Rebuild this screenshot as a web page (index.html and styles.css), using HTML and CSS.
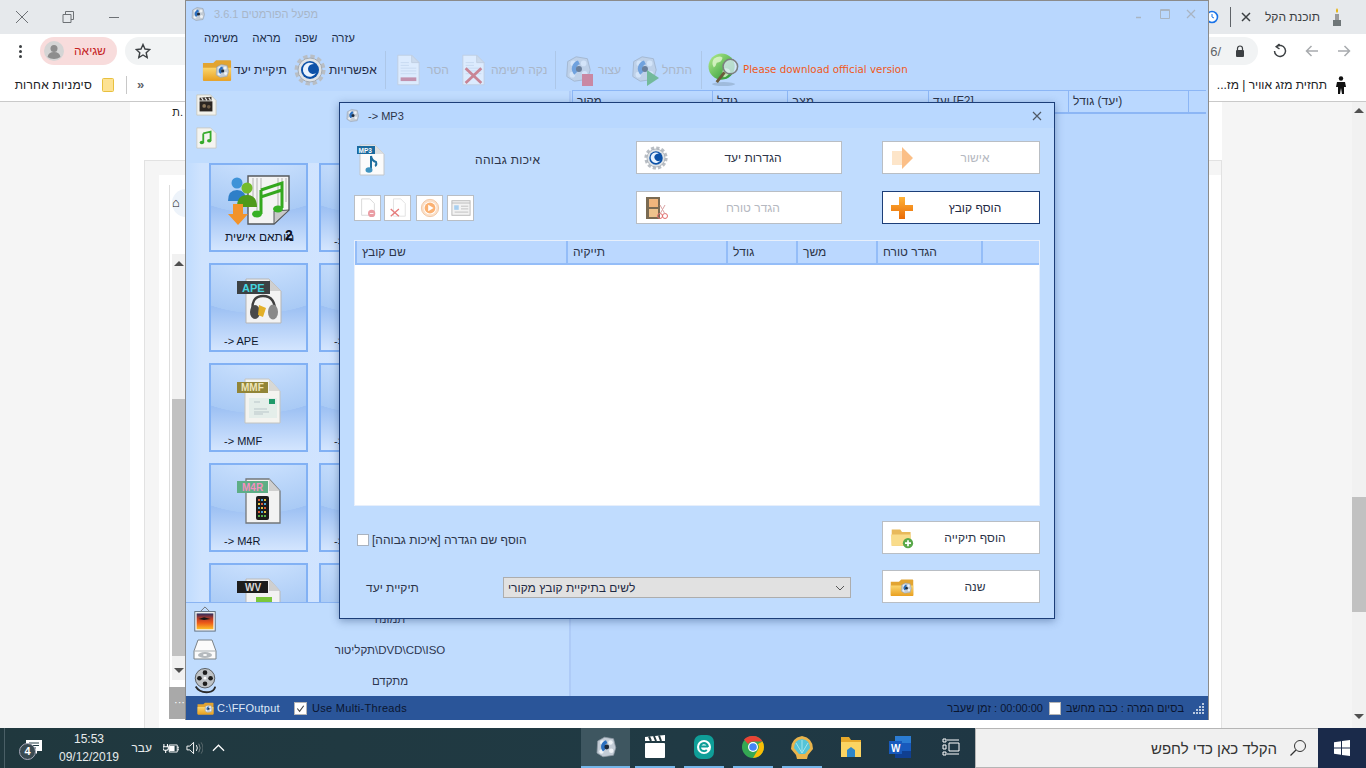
FILE: index.html
```html
<!DOCTYPE html>
<html lang="he">
<head>
<meta charset="utf-8">
<title>Format Factory</title>
<link rel="stylesheet" href="styles.css">
</head>
<body>
<svg class="defs" aria-hidden="true">
  <defs>
    <linearGradient id="gFolder" x1="0" y1="0" x2="0" y2="1"><stop offset="0" stop-color="#fbd66f"/><stop offset="1" stop-color="#e9a020"/></linearGradient>
    <linearGradient id="gGlobe" x1="0" y1="0" x2="1" y2="1"><stop offset="0" stop-color="#b6ee8e"/><stop offset="1" stop-color="#1d8f2e"/></linearGradient>
    <linearGradient id="gPlus" x1="0" y1="0" x2="0" y2="1"><stop offset="0" stop-color="#ffb338"/><stop offset="1" stop-color="#e96a05"/></linearGradient>
    <linearGradient id="gSunset" x1="0" y1="0" x2="0" y2="1"><stop offset="0" stop-color="#2a2c5f"/><stop offset=".3" stop-color="#b23a2a"/><stop offset=".6" stop-color="#ee5a18"/><stop offset="1" stop-color="#fbc02a"/></linearGradient>
    <symbol id="app" viewBox="0 0 32 32">
      <path d="M5 8 L14 3 L26 5 L29 17 L26 27 L12 29 L4 24 Z" fill="#c3ccd6" stroke="#8f99a4"/>
      <circle cx="11" cy="10" r="3" fill="#eef2f6"/><circle cx="22" cy="10" r="3" fill="#eef2f6"/>
      <circle cx="23" cy="21" r="3" fill="#eef2f6"/><circle cx="10" cy="22" r="3" fill="#eef2f6"/>
      <path d="M16 7 a9 9 0 0 0 -4 15 l4 -4 a4 4 0 0 1 2 -7 Z" fill="#2a6fc0"/>
      <circle cx="17" cy="16" r="3.2" fill="#1e2a3a"/>
    </symbol>
    <symbol id="folder" viewBox="0 0 32 26">
      <path d="M1 6 h11 l3 -3 h15 a1 1 0 0 1 1 1 v20 a1 1 0 0 1 -1 1 H2 a1 1 0 0 1 -1 -1 Z" fill="#e2a431"/>
      <path d="M1 11 h30 v13 a1 1 0 0 1 -1 1 H2 a1 1 0 0 1 -1 -1 Z" fill="url(#gFolder)"/>
      <use href="#app" x="13" y="6" width="17" height="17"/>
    </symbol>
    <symbol id="gear" viewBox="0 0 32 32">
      <circle cx="16" cy="16" r="13" fill="none" stroke="#b9bec4" stroke-width="5" stroke-dasharray="4.1 2.7"/>
      <circle cx="16" cy="16" r="12" fill="#dfe3e6" stroke="#a4abb3"/>
      <circle cx="16" cy="16" r="9" fill="#0d52a8"/>
      <path d="M20 10 a7 7 0 1 0 2 9 a5 5 0 1 1 -6 -8 q2 -1 4 -1 Z" fill="#e8f3ff"/>
    </symbol>
    <symbol id="doc" viewBox="0 0 26 34">
      <path d="M2 1 H17 L25 9 V33 H2 Z" fill="#fff" stroke="#c7c7c7"/>
      <path d="M17 1 V9 H25 Z" fill="#ddd" stroke="#c7c7c7"/>
    </symbol>
    <symbol id="docLines" viewBox="0 0 26 34">
      <use href="#doc" width="26" height="34"/>
      <path d="M5 9 H14 M5 12 H14 M5 15 H22 M5 18 H22 M5 21 H22" stroke="#d4dbe4"/>
    </symbol>
    <symbol id="tbRemove" viewBox="0 0 26 34">
      <use href="#docLines" width="26" height="34"/>
      <rect x="5" y="25" width="17" height="4" fill="#cc4f60"/>
    </symbol>
    <symbol id="tbClear" viewBox="0 0 26 34">
      <use href="#docLines" width="26" height="34"/>
      <path d="M5 15 L22 31 M22 15 L5 31" stroke="#d8342f" stroke-width="3"/>
    </symbol>
    <symbol id="globe" viewBox="0 0 34 36">
      <ellipse cx="16" cy="33" rx="12" ry="2" fill="#9fbbdc"/>
      <circle cx="14" cy="15" r="13.5" fill="url(#gGlobe)"/>
      <path d="M6 7 q6 -4 9 -1 q-1 5 -6 5 q-1 4 -3 5 q-3 -4 0 -9 Z M16 17 q6 -1 7 3 q-3 6 -7 6 q-2 -5 0 -9 Z" fill="#e7f9d5" opacity=".75"/>
      <circle cx="23" cy="15" r="7.5" fill="#dcecfa" fill-opacity=".75" stroke="#7c7f80" stroke-width="1.6"/>
      <path d="M17 21 L9 31" stroke="#6b5a3a" stroke-width="3"/>
    </symbol>
    <symbol id="film" viewBox="0 0 24 24">
      <path d="M2 1 H17 L23 7 V23 H2 Z" fill="#f2f2ec" stroke="#c9c9c0"/>
      <rect x="5" y="8" width="14" height="11" fill="#2b2622"/>
      <path d="M5 4 l13 -1 v4 H5 Z" fill="#3b342d"/>
      <path d="M7 4 l2 3 M11 4 l2 3 M15 4 l2 3" stroke="#eee" stroke-width="1.2"/>
      <circle cx="10" cy="13" r="2" fill="#8e7a5d"/><circle cx="15" cy="14" r="2" fill="#6f5e48"/>
    </symbol>
    <symbol id="musicDoc" viewBox="0 0 24 24">
      <path d="M2 1 H17 L23 7 V23 H2 Z" fill="#f4f4f0" stroke="#cbcbc4"/>
      <path d="M9 7 l8 -2 v10 M9 7 v10" stroke="#37ab2c" stroke-width="2" fill="none"/>
      <ellipse cx="7.5" cy="17" rx="2.4" ry="1.9" fill="#37ab2c"/><ellipse cx="15.5" cy="15" rx="2.4" ry="1.9" fill="#37ab2c"/>
    </symbol>
    <symbol id="custom" viewBox="0 0 66 54">
      <path d="M22 3 H63 V37 L48 51 H22 Z" fill="#f4f4f4" stroke="#54585c" stroke-width="1.4"/>
      <path d="M63 37 L48 51 V38 Z" fill="#c8c8c8" stroke="#54585c"/>
      <path d="M27 5 v28 M31 5 v32 M35 5 v26 M52 5 v30 M56 5 v28 M60 5 v24" stroke="#c7c7c7" stroke-width="1.5"/>
      <path d="M35 17 V41 M35 17 L56 10 V35 M35 17 V24 L56 17" stroke="#34a81f" stroke-width="3" fill="none"/>
      <ellipse cx="31" cy="41" rx="5" ry="3.5" fill="#37b125"/><ellipse cx="52" cy="36" rx="5" ry="3.5" fill="#37b125"/>
      <circle cx="11" cy="10" r="5.5" fill="#3f93d8"/><path d="M2 28 q0 -11 9 -11 q9 0 9 11 Z" fill="#2f7fc8"/>
      <circle cx="21" cy="15" r="5.5" fill="#74bb2c"/><path d="M11 34 q0 -12 10 -12 q10 0 10 12 Z" fill="#4e9a1b"/>
      <path d="M7 31 H17 V41 H22 L12 52 L2 41 H7 Z" fill="#f2932a"/>
    </symbol>
    <symbol id="ape" viewBox="0 0 46 46">
      <path d="M10 1 H33 L45 13 V45 H10 Z" fill="#f3f3f3" stroke="#b5b5b5"/>
      <path d="M33 1 V13 H45 Z" fill="#cfcfcf"/>
      <rect x="1" y="3" width="33" height="13" fill="#3c4144"/>
      <text x="6" y="13.5" class="fileTag tagCyan">APE</text>
      <path d="M17 36 q-3 -18 10 -18 q13 0 12 18" fill="none" stroke="#3e3e3e" stroke-width="2.4"/>
      <ellipse cx="19" cy="34" rx="5" ry="7" fill="#4a4a4a"/>
      <ellipse cx="37" cy="34" rx="5" ry="7.5" fill="#8a8a8a"/>
      <path d="M23 27 l7 3 l-3 9 l-5 -2 Z" fill="#e3b028"/>
    </symbol>
    <symbol id="mmf" viewBox="0 0 46 46">
      <path d="M9 1 H33 L44 13 V45 H9 Z" fill="#f4f4f0" stroke="#c4c4c0"/>
      <path d="M33 1 V13 H44 Z" fill="#d8d8d4"/>
      <rect x="1" y="4" width="31" height="11" fill="#928538"/>
      <text x="5" y="13" class="fileTag tagCream">MMF</text>
      <rect x="13" y="20" width="28" height="20" fill="#e4eeea"/>
      <path d="M18 24 H24 M18 31 H31 M18 34 H33 M18 36 H27" stroke="#b9c6c9"/>
      <rect x="33" y="21" width="6" height="5" fill="#1f9a6a"/>
    </symbol>
    <symbol id="m4r" viewBox="0 0 46 46">
      <path d="M10 1 H33 L44 13 V45 H10 Z" fill="#f2f2f2" stroke="#73777a" stroke-width="1.3"/>
      <path d="M33 1 V13 H44 Z" fill="#cfcfcf"/>
      <rect x="1" y="3" width="31" height="12" fill="#5eae86"/>
      <text x="6" y="13" class="fileTag tagPink">M4R</text>
      <rect x="20" y="18" width="13" height="24" rx="2" fill="#1c1c1c"/>
      <path d="M22 21 h2 v2 h-2 Z M25 25 h2 v2 h-2 Z M28 29 h2 v2 h-2 Z M22 33 h2 v2 h-2 Z" fill="#d85c3a"/>
      <path d="M25 21 h2 v2 h-2 Z M28 25 h2 v2 h-2 Z M22 29 h2 v2 h-2 Z M25 33 h2 v2 h-2 Z" fill="#4da5d8"/>
      <path d="M28 21 h2 v2 h-2 Z M22 25 h2 v2 h-2 Z M25 29 h2 v2 h-2 Z M28 33 h2 v2 h-2 Z" fill="#e3c43f"/>
      <path d="M22 37 h2 v2 h-2 Z M25 37 h2 v2 h-2 Z M28 37 h2 v2 h-2 Z" fill="#58b04c"/>
    </symbol>
    <symbol id="wv" viewBox="0 0 46 46">
      <path d="M10 1 H33 L44 13 V45 H10 Z" fill="#f2f2f2" stroke="#b8b8b8"/>
      <path d="M33 1 V13 H44 Z" fill="#cfcfcf"/>
      <rect x="1" y="3" width="31" height="12" fill="#1d1d1d"/>
      <text x="9" y="13" class="fileTag tagGrey">WV</text>
      <rect x="20" y="19" width="16" height="22" fill="#7ac73b"/>
    </symbol>
    <symbol id="mp3" viewBox="0 0 28 32">
      <path d="M3 1 H18 L27 10 V31 H3 Z" fill="#fbfbfb" stroke="#c2c6ca"/>
      <path d="M18 1 V10 H27 Z" fill="#dcdfe2"/>
      <rect x="0" y="2" width="18" height="8" fill="#1b6a9e"/>
      <text x="1.500" y="8.800" class="fileTag tagMp3">MP3</text>
      <path d="M14 12 q1 5 5 6 q1 3 -1 4 M14 12 V26" fill="none" stroke="#1f6f9f" stroke-width="2"/>
      <ellipse cx="12" cy="26" rx="3.500" ry="2.700" fill="#3f93bf"/>
    </symbol>
    <symbol id="plus" viewBox="0 0 24 24">
      <path d="M9 1 H15 V9 H23 V15 H15 V23 H9 V15 H1 V9 H9 Z" fill="url(#gPlus)"/>
    </symbol>
    <symbol id="arrowRight" viewBox="0 0 24 24">
      <path d="M2 5 H12 V1 L23 12 L12 23 V19 H2 Z" fill="#fbbf87"/>
      <path d="M2 5 H12 V19 H2 Z" fill="#fde5c9"/>
    </symbol>
    <symbol id="filmCut" viewBox="0 0 24 24">
      <rect x="2" y="1" width="14" height="22" fill="#7a6a52"/>
      <rect x="5" y="3" width="9" height="8" fill="#f0b57c"/><rect x="5" y="13" width="9" height="8" fill="#eec28c"/>
      <circle cx="16" cy="20" r="2.500" fill="none" stroke="#e36b6b"/><circle cx="21" cy="20" r="2.500" fill="none" stroke="#e36b6b"/>
      <path d="M16 18 L21 9 M21 18 L16 9" stroke="#d9a2a2"/>
    </symbol>
    <symbol id="folderPlus" viewBox="0 0 28 26">
      <path d="M2 3 h10 l2 3 h10 v16 H2 Z" fill="#e8b95b"/><path d="M1 9 H24 V22 H2 Z" fill="#f9dc8b"/>
      <circle cx="21" cy="19" r="6" fill="#59a84a"/><path d="M21 15.500 V22.500 M17.500 19 H24.500" stroke="#fff" stroke-width="2"/>
    </symbol>
    <symbol id="scenic" viewBox="0 0 24 28">
      <path d="M7 6 L12 1 L17 6" fill="none" stroke="#6d6d6d"/>
      <rect x="1" y="6" width="22" height="21" fill="#f4f4f4" stroke="#5a6a7a"/>
      <rect x="3" y="8" width="18" height="17" fill="url(#gSunset)"/>
      <path d="M5 14 l6 -2 l7 2 l-7 1 Z" fill="#161616"/>
    </symbol>
    <symbol id="drive" viewBox="0 0 24 24">
      <path d="M5 2 H19 L23 13 V21 H1 V13 Z" fill="#fbfbfb" stroke="#7b8287"/>
      <path d="M1 13 H23" stroke="#a8afb3"/>
      <ellipse cx="12" cy="17" rx="7" ry="3" fill="#b5babe"/><ellipse cx="12" cy="17" rx="2" ry="1" fill="#fff"/>
    </symbol>
    <symbol id="reel" viewBox="0 0 24 28">
      <circle cx="12" cy="11" r="10.500" fill="#bfc3c6" stroke="#54585b"/>
      <circle cx="12" cy="5" r="2.500" fill="#1d1d1d"/><circle cx="6" cy="11" r="2.500" fill="#1d1d1d"/>
      <circle cx="18" cy="11" r="2.500" fill="#1d1d1d"/><circle cx="12" cy="17" r="2.500" fill="#1d1d1d"/>
      <circle cx="12" cy="11" r="1.500" fill="#fff"/>
      <path d="M2 20 q4 7 14 6 q6 -1 7 -6" fill="none" stroke="#2a2a2a" stroke-width="2"/>
    </symbol>
  </defs>
</svg>

<div class="screen">
  <div class="browser">
    <div class="tabstrip">
      <div class="wincontrols">
        <svg class="ico16" viewBox="0 0 16 16"><path d="M2 2 L14 14 M14 2 L2 14" stroke="#6d7175" stroke-width="1"/></svg>
        <svg class="ico16" viewBox="0 0 16 16"><path d="M3 5.500 H11 V13.500 H3 Z M5.500 5 V2.500 H13.500 V10.500 H11" fill="none" stroke="#6d7175"/></svg>
        <svg class="ico16" viewBox="0 0 16 16"><path d="M3 8.500 H13" stroke="#6d7175"/></svg>
      </div>
      <div class="tabinfo">
        <svg class="clock" viewBox="0 0 14 14"><circle cx="7" cy="7" r="5.500" fill="#fff" stroke="#1a73e8" stroke-width="1.600"/><path d="M7 4 V7 L9 8" fill="none" stroke="#1a73e8"/></svg>
        <i class="tabdiv"></i>
        <svg class="tabclose" viewBox="0 0 10 10"><path d="M1 1 L9 9 M9 1 L1 9" stroke="#3c4043" stroke-width="1.500"/></svg>
        <span class="tabtitle" dir="rtl">תוכנת הקל</span>
        <svg class="candle" viewBox="0 0 10 18"><path d="M5 0 q2 3 0 5 q-2 -2 0 -5" fill="#e8b100"/><rect x="3" y="6" width="4" height="6" fill="#9b9b9b"/><rect x="1" y="12" width="8" height="6" fill="#6f7678"/></svg>
      </div>
    </div>
    <div class="toolbar">
      <div class="menu-dots"><i></i><i></i><i></i></div>
      <div class="errorpill">
        <svg class="avatar" viewBox="0 0 20 20"><circle cx="10" cy="10" r="10" fill="#d5d5d5"/><circle cx="10" cy="7.500" r="3.500" fill="#8d8d8d"/><path d="M3.500 16 q1 -5 6.500 -5 q5.500 0 6.500 5 q-3 2 -6.500 2 q-3.500 0 -6.500 -2" fill="#8d8d8d"/></svg>
        <span dir="rtl">שגיאה</span>
      </div>
      <div class="omnibox">
        <svg class="star" viewBox="0 0 16 16"><path d="M8 1.500 L10 6 L14.800 6.500 L11.200 9.700 L12.200 14.500 L8 12 L3.800 14.500 L4.800 9.700 L1.200 6.500 L6 6 Z" fill="none" stroke="#3c4043" stroke-width="1.400"/></svg>
        <span class="urlend">6/</span>
        <svg class="lock" viewBox="0 0 10 12"><path d="M2.500 5 V3.500 a2.500 2.500 0 0 1 5 0 V5" fill="none" stroke="#3c4043" stroke-width="1.200"/><rect x="1" y="5" width="8" height="7" rx="1" fill="#3c4043"/></svg>
      </div>
      <div class="navbtns">
        <svg class="nav" viewBox="0 0 16 16"><path d="M13.500 8 a5.500 5.500 0 1 1 -2 -4.300 M8.500 1 L11.800 3.800 L8.500 6" fill="none" stroke="#3c4043" stroke-width="1.500" transform="matrix(-1 0 0 1 16 0)"/></svg>
        <svg class="nav" viewBox="0 0 16 16"><path d="M14 8 H2.500 M7.500 3 L2.500 8 L7.500 13" fill="none" stroke="#a8abae" stroke-width="1.500"/></svg>
        <svg class="nav" viewBox="0 0 16 16"><path d="M2 8 H13.500 M8.500 3 L13.500 8 L8.500 13" fill="none" stroke="#a8abae" stroke-width="1.500"/></svg>
      </div>
    </div>
    <div class="bookmarks">
      <span class="bm-other" dir="rtl">סימניות אחרות</span>
      <svg class="bm-folder" viewBox="0 0 12 14"><rect x="0.500" y="0.500" width="11" height="13" rx="1" fill="#fde293" stroke="#e8c03f"/></svg>
      <i class="bm-div"></i>
      <span class="bm-more">»</span>
      <span class="bm-fill"></span>
      <span class="bm-weather" dir="rtl">תחזית מזג אוויר | מז...</span>
      <svg class="bm-man" viewBox="0 0 12 18"><circle cx="6" cy="2.500" r="2.200" fill="#111"/><path d="M2 6 H10 L11 11 H9 L9 18 H7 L6 12 L5 18 H3 L3 11 H1 Z" fill="#111"/></svg>
    </div>
    <div class="page">
      <div class="gutter"></div>
      <div class="pagemain">
        <div class="pagetop">
          <span class="cutoff">ת.</span>
        </div>
        <div class="box">
          <div class="boxinner">
            <div class="innercol">
              <div class="searchslot"><span class="searchcircle">⌂</span></div>
              <div class="innerscroll">
                <span class="sb-up"></span>
                <span class="sb-track"></span>
                <span class="sb-thumb"></span>
                <span class="sb-down"></span>
              </div>
              <div class="greybar">···</div>
            </div>
          </div>
        </div>
      </div>
      <div class="gutter gutter-r"></div>
      <div class="pagescroll">
        <span class="ps-up"></span>
        <span class="ps-thumb"></span>
        <span class="ps-down"></span>
      </div>
    </div>
  </div>

  <div class="taskbar">
    <i class="tb-line"></i>
    <div class="notif">
      <svg class="notif-ico" viewBox="0 0 18 16"><path d="M1 1 H17 V12 H12 V15 L9 12 H1 Z" fill="#fff"/><path d="M4 4 H14 M4 6.500 H14 M4 9 H11" stroke="#223a42"/></svg>
      <span class="notif-badge">4</span>
    </div>
    <div class="clocktext"><span>15:53</span><span>09/12/2019</span></div>
    <span class="tb-lang" dir="rtl">עבר</span>
    <svg class="tb-batt" viewBox="0 0 18 12"><path d="M7 2 H16 V10 H7 Z M16 4.500 H18 V7.500 H16" fill="none" stroke="#fff"/><rect x="7" y="3" width="6" height="6" fill="#fff"/><path d="M1 1 V4 M5 1 V4 M0 4 H6 V6 Q6 8 3 8 Q0 8 0 6 Z M3 8 V11" fill="none" stroke="#fff" stroke-width="1.200"/></svg>
    <svg class="tb-sound" viewBox="0 0 18 14"><path d="M1 5 H4 L8 1 V13 L4 9 H1 Z" fill="none" stroke="#fff"/><path d="M11 4 q2 3 0 6" fill="none" stroke="#fff"/><path d="M13.500 2.500 q3 4.500 0 9" fill="none" stroke="#888f92"/><path d="M16 1 q4 6 0 12" fill="none" stroke="#5f6c70"/></svg>
    <svg class="tb-caret" viewBox="0 0 14 8"><path d="M1 7 L7 1 L13 7" fill="none" stroke="#fff" stroke-width="1.300"/></svg>
    <span class="tb-fill"></span>
    <div class="tb-apps">
      <div class="tb-app tb-active"><svg class="tb-appico" viewBox="0 0 32 32"><use href="#app"/></svg></div>
      <div class="tb-app tb-run">
        <svg class="tb-appico" viewBox="0 0 24 24"><rect x="2" y="8" width="20" height="15" rx="1" fill="#fff"/><path d="M2 2 L22 0 V6 H2 Z" fill="#fff"/><path d="M6 1.500 L8 6 M11 1 L13 6 M16 .5 L18 6" stroke="#23393f" stroke-width="2"/></svg>
      </div>
      <div class="tb-app tb-run">
        <svg class="tb-appico" viewBox="0 0 24 24"><rect x="2" y="0" width="20" height="24" rx="7" fill="#0f9e98"/><circle cx="12" cy="12" r="7" fill="#fff"/><path d="M8 11.500 H16 M16 12 a4 4 0 1 0 -1.200 3" fill="none" stroke="#0f9e98" stroke-width="2"/></svg>
      </div>
      <div class="tb-app tb-run">
        <svg class="tb-appico" viewBox="0 0 24 24"><circle cx="12" cy="12" r="11" fill="#34a853"/><path d="M12 1 A11 11 0 0 1 21.500 6.500 H12 A5.500 5.500 0 0 0 7 9 L3 4.500 A11 11 0 0 1 12 1" fill="#ea4335"/><path d="M21.500 6.500 A11 11 0 0 1 12 23 L16.800 15 A5.500 5.500 0 0 0 17 9 Z" fill="#fbbc05"/><circle cx="12" cy="12" r="5" fill="#fff"/><circle cx="12" cy="12" r="3.800" fill="#4285f4"/></svg>
      </div>
      <div class="tb-app tb-run">
        <svg class="tb-appico" viewBox="0 0 24 24"><path d="M12 1 Q23 3 23 14 L18 20 L17 24 H7 L6 20 L1 14 Q1 3 12 1" fill="#e9b44c"/><path d="M12 4 Q20 5 20 13 L15 19 H9 L4 13 Q4 5 12 4" fill="#55c4d8"/><path d="M12 18 L6 8 M12 18 L12 5 M12 18 L18 8" stroke="#a6e4ec"/></svg>
      </div>
      <div class="tb-app">
        <svg class="tb-appico" viewBox="0 0 24 24"><path d="M2 2 H10 L12 5 H22 V22 H2 Z" fill="#e8a92b"/><path d="M2 7 H22 V22 H2 Z" fill="#fcd462"/><path d="M8 22 V15 L12 12 L16 15 V22" fill="#2f86c9"/></svg>
      </div>
      <div class="tb-app">
        <svg class="tb-appico" viewBox="0 0 24 24"><rect x="7" y="1" width="16" height="22" fill="#2b7cd3"/><rect x="7" y="8" width="16" height="8" fill="#185abd"/><rect x="7" y="16" width="16" height="7" fill="#103f91"/><rect x="1" y="6" width="13" height="13" fill="#185abd"/><text x="3" y="16.500" class="wordW">W</text></svg>
      </div>
      <div class="tb-app">
        <svg class="tb-appico tb-view" viewBox="0 0 18 18"><path d="M1 1 H4 V4 H1 Z M1 7 H4 V11 H1 Z M1 14 H4 V17 H1 Z M5 2 H17 M5 16 H17 M7 5 H17 V13 H7 Z" fill="none" stroke="#fff"/></svg>
      </div>
    </div>
    <div class="searchbox">
      <span class="searchtext" dir="rtl">הקלד כאן כדי לחפש</span>
      <svg class="searchico" viewBox="0 0 18 18"><circle cx="11" cy="7" r="5.500" fill="none" stroke="#333"/><path d="M7 11 L1.500 16.500" stroke="#333" stroke-width="1.300"/></svg>
    </div>
    <div class="winbtn">
      <svg class="winlogo" viewBox="0 0 16 16"><path d="M0 2.200 L7 1.200 V7.500 H0 Z M8 1 L16 0 V7.500 H8 Z M0 8.500 H7 V14.800 L0 13.800 Z M8 8.500 H16 V16 L8 15 Z" fill="#fff"/></svg>
    </div>
  </div>

  <div class="ffwin">
    <div class="ff-title">
      <svg class="ff-titleicon" viewBox="0 0 32 32"><use href="#app"/></svg>
      <span class="ff-titletext" dir="rtl">מפעל הפורמטים 3.6.1</span>
      <div class="ff-controls">
        <svg class="ctl" viewBox="0 0 10 10"><path d="M2 8.500 H7" stroke="#a9b4c2" stroke-width="1.500"/></svg>
        <svg class="ctl" viewBox="0 0 10 10"><path d="M.5 .5 H9.500 V9.500 H.5 Z M.5 1.500 H9.500" fill="none" stroke="#a9b4c2"/></svg>
        <svg class="ctl" viewBox="0 0 10 10"><path d="M1 1 L9 9 M9 1 L1 9" stroke="#a9b4c2" stroke-width="1.200"/></svg>
      </div>
    </div>
    <div class="ff-menu" dir="ltr">
      <span>משימה</span><span>מראה</span><span>שפה</span><span>עזרה</span>
    </div>
    <div class="ff-tools">
      <svg class="t-folder" viewBox="0 0 32 26"><use href="#folder"/></svg>
      <span class="t-label t-l1">תיקיית יעד</span>
      <svg class="t-gear" viewBox="0 0 32 32"><use href="#gear"/></svg>
      <span class="t-label t-l2">אפשרויות</span>
      <i class="t-sep"></i>
      <svg class="t-doc dim" viewBox="0 0 26 34"><use href="#tbRemove"/></svg>
      <span class="t-label off t-l3">הסר</span>
      <svg class="t-doc dim t-i4" viewBox="0 0 26 34"><use href="#tbClear"/></svg>
      <span class="t-label off t-l4">נקה רשימה</span>
      <i class="t-sep t-s2"></i>
      <span class="t-reel dim"><svg class="t-reel-i" viewBox="0 0 32 32"><use href="#app"/></svg><i class="t-stop"></i></span>
      <span class="t-label off t-l5">עצור</span>
      <span class="t-reel dim t-i6"><svg class="t-reel-i" viewBox="0 0 32 32"><use href="#app"/></svg><i class="t-play"></i></span>
      <span class="t-label off t-l6">התחל</span>
      <i class="t-sep t-s3"></i>
      <svg class="t-globe" viewBox="0 0 34 36"><use href="#globe"/></svg>
      <span class="t-official">Please download official version</span>
    </div>
    <div class="ff-body">
      <div class="ff-left">
        <div class="cat-strip">
          <svg class="cat-ico" viewBox="0 0 24 24"><use href="#film"/></svg>
          <svg class="cat-ico" viewBox="0 0 24 24"><use href="#musicDoc"/></svg>
        </div>
        <div class="tiles">
          <div class="tile"><svg class="tile-custom" viewBox="0 0 66 54"><use href="#custom"/></svg><span class="tile-label tile-he" dir="rtl">מותאם אישית</span><b class="tile-badge">2</b></div>
          <div class="tile"><span class="tile-gap"></span><span class="tile-label">-&gt; MP3</span></div>
          <div class="tile"><svg class="tile-icon" viewBox="0 0 46 46"><use href="#ape"/></svg><span class="tile-label">-&gt; APE</span></div>
          <div class="tile"><span class="tile-gap"></span><span class="tile-label">-&gt; WMA</span></div>
          <div class="tile"><svg class="tile-icon" viewBox="0 0 46 46"><use href="#mmf"/></svg><span class="tile-label">-&gt; MMF</span></div>
          <div class="tile"><span class="tile-gap"></span><span class="tile-label">-&gt; FLAC</span></div>
          <div class="tile"><svg class="tile-icon" viewBox="0 0 46 46"><use href="#m4r"/></svg><span class="tile-label">-&gt; M4R</span></div>
          <div class="tile"><span class="tile-gap"></span><span class="tile-label">-&gt; AAC</span></div>
          <div class="tile"><svg class="tile-icon" viewBox="0 0 46 46"><use href="#wv"/></svg></div>
          <div class="tile"></div>
        </div>
        <div class="cats-bottom">
          <div class="cat-row"><svg class="cat-big" viewBox="0 0 24 28"><use href="#scenic"/></svg><span dir="rtl">תמונה</span></div>
          <div class="cat-row"><svg class="cat-big" viewBox="0 0 24 24"><use href="#drive"/></svg><span dir="rtl">DVD\CD\ISO\תקליטור</span></div>
          <div class="cat-row"><svg class="cat-big" viewBox="0 0 24 28"><use href="#reel"/></svg><span dir="rtl">מתקדם</span></div>
        </div>
      </div>
      <div class="ff-right">
        <div class="listhead">
          <span class="lh-a">מקור</span>
          <span class="lh-b">גודל</span>
          <span class="lh-c">מצב</span>
          <span class="lh-d">יעד [F2]</span>
          <span class="lh-e"><span class="lh-inner" dir="rtl">(יעד) גודל</span></span>
          <span class="lh-f"></span>
        </div>
      </div>
    </div>
    <div class="ff-status">
      <svg class="st-folder" viewBox="0 0 32 26"><use href="#folder"/></svg>
      <span class="st-path">C:\FFOutput</span>
      <span class="st-check"><svg viewBox="0 0 12 12"><path d="M2.500 6 L5 9 L9.500 3" fill="none" stroke="#444" stroke-width="1.200"/></svg></span>
      <span class="st-mt">Use Multi-Threads</span>
      <span class="st-fill"></span>
      <span class="st-time" dir="rtl">00:00:00 : זמן שעבר</span>
      <span class="st-check st-empty"></span>
      <span class="st-end" dir="rtl">בסיום המרה : כבה מחשב</span>
      <svg class="st-grip" viewBox="0 0 12 12"><path d="M9 1 h2 v2 h-2 Z M6 4 h2 v2 h-2 Z M9 4 h2 v2 h-2 Z M3 7 h2 v2 h-2 Z M6 7 h2 v2 h-2 Z M9 7 h2 v2 h-2 Z M0 10 h2 v2 h-2 Z M3 10 h2 v2 h-2 Z M6 10 h2 v2 h-2 Z M9 10 h2 v2 h-2 Z" fill="#b9c9e0"/></svg>
    </div>
  </div>

  <div class="dialog">
    <div class="dlg-title">
      <svg class="dlg-appicon" viewBox="0 0 32 32"><use href="#app"/></svg>
      <span class="dlg-name">-&gt; MP3</span>
      <svg class="dlg-close" viewBox="0 0 10 10"><path d="M1 1 L9 9 M9 1 L1 9" stroke="#505a66" stroke-width="1.200"/></svg>
    </div>
    <div class="dlg-body">
      <div class="dlg-quality">
        <svg class="dlg-mp3" viewBox="0 0 28 32"><use href="#mp3"/></svg>
        <span class="dlg-qtext" dir="rtl">איכות גבוהה</span>
      </div>
      <button class="btn"><svg class="btn-ico" viewBox="0 0 32 32"><use href="#gear"/></svg><span class="btn-text">הגדרות יעד</span></button>
      <span></span>
      <button class="btn btn-off"><svg class="btn-ico" viewBox="0 0 24 24"><use href="#arrowRight"/></svg><span class="btn-text">אישור</span></button>

      <div class="dlg-small">
        <span class="sbtn"><svg viewBox="0 0 20 22"><path d="M3 1 H12 L17 6 V19 H3 Z" fill="#fff" stroke="#d7d7d7"/><circle cx="14" cy="17" r="4" fill="#ea9ca3"/><path d="M12 17 H16" stroke="#fff"/></svg></span>
        <span class="sbtn"><svg viewBox="0 0 20 22"><path d="M5 1 H13 L18 6 V20 H5 Z" fill="#fff" stroke="#e0e0e0"/><path d="M2 12 L11 20 M11 12 L2 20" stroke="#e77b7b" stroke-width="1.500"/></svg></span>
        <span class="sbtn"><svg viewBox="0 0 22 22"><circle cx="11" cy="11" r="9.500" fill="#fbe0c9" stroke="#f1c6a2"/><circle cx="11" cy="11" r="7" fill="#fff"/><circle cx="11" cy="11" r="6" fill="#fbb172"/><path d="M9 7.500 L15 11 L9 14.500 Z" fill="#fff"/></svg></span>
        <span class="sbtn"><svg viewBox="0 0 22 18"><rect x="1" y="1" width="20" height="16" fill="#f2f2f2" stroke="#b7b7b7"/><path d="M1 3.500 H21" stroke="#b7b7b7"/><rect x="3.500" y="6" width="5" height="5" fill="#a8cff0"/><path d="M11 7 H19 M11 10 H19 M4 13.500 H19" stroke="#bdbdbd"/></svg></span>
      </div>
      <button class="btn btn-off"><svg class="btn-ico" viewBox="0 0 24 24"><use href="#filmCut"/></svg><span class="btn-text">הגדר טורח</span></button>
      <span></span>
      <button class="btn btn-focus"><svg class="btn-ico" viewBox="0 0 24 24"><use href="#plus"/></svg><span class="btn-text">הוסף קובץ</span></button>

      <div class="dlg-table">
        <div class="dt-head">
          <span class="c1">שם קובץ</span><span class="c2">תייקיה</span><span class="c3">גודל</span><span class="c4">משך</span><span class="c5">הגדר טורח</span><span class="c6"></span>
        </div>
      </div>

      <label class="dlg-addname"><span class="dlg-cb"></span><span dir="rtl">הוסף שם הגדרה [איכות גבוהה]</span></label>
      <span></span>
      <button class="btn"><svg class="btn-ico" viewBox="0 0 28 26"><use href="#folderPlus"/></svg><span class="btn-text">הוסף תיקייה</span></button>

      <div class="dlg-dest">
        <span class="dlg-destlabel" dir="rtl">תיקיית יעד</span>
        <div class="dlg-select">
          <span class="sel-text" dir="rtl">לשים בתיקיית קובץ מקורי</span>
          <svg class="sel-caret" viewBox="0 0 10 6"><path d="M1 1 L5 5 L9 1" fill="none" stroke="#555"/></svg>
        </div>
      </div>
      <span></span>
      <button class="btn"><svg class="btn-ico" viewBox="0 0 32 26"><use href="#folder"/></svg><span class="btn-text">שנה</span></button>
    </div>
  </div>
</div>
</body>
</html>
```

FILE: styles.css
```css
* { box-sizing: border-box; }
html, body { margin: 0; padding: 0; }
body { width: 1366px; height: 768px; overflow: hidden; font-family: "Liberation Sans", "DejaVu Sans", sans-serif; font-size: 12px; color: #1f2a44; background: #fff; }
.defs { width: 0; height: 0; position: absolute; }
.screen { position: relative; width: 1366px; height: 768px; display: flex; flex-direction: column; overflow: hidden; }
i { display: block; }
svg { display: block; flex: none; }

/* Browser behind */
.browser { height: 728px; display: flex; flex-direction: column; }
.tabstrip { height: 34px; background: #e6e9ec; display: flex; align-items: center; }
.wincontrols { display: flex; gap: 30px; padding-left: 14px; }
.ico16 { width: 16px; height: 16px; }
.tabinfo { margin-left: auto; display: flex; align-items: center; padding-right: 24px; color: #3c4043; }
.clock { width: 14px; height: 14px; margin-right: 11px; }
.tabdiv { width: 1px; height: 20px; background: #5f6368; margin-right: 10px; }
.tabclose { width: 10px; height: 10px; margin-right: 11px; }
.tabtitle { font-size: 12px; width: 58px; white-space: nowrap; overflow: hidden; margin-right: 12px; }
.candle { width: 10px; height: 18px; }
.toolbar { height: 34px; background: #fff; display: flex; align-items: center; }
.menu-dots { width: 40px; display: flex; flex-direction: column; align-items: center; gap: 2px; padding-right: 0; }
.menu-dots i { width: 3px; height: 3px; border-radius: 50%; background: #3c4043; }
.errorpill { width: 77px; height: 28px; border-radius: 14px; background: #f8dcdc; display: flex; align-items: center; padding-left: 4px; gap: 10px; color: #c5221f; font-size: 12px; }
.avatar { width: 20px; height: 20px; }
.omnibox { margin-left: 8px; width: 1133px; height: 28px; background: #f1f3f4; border-radius: 14px; display: flex; align-items: center; padding-left: 10px; }
.star { width: 16px; height: 16px; }
.urlend { margin-left: auto; margin-right: 14px; color: #5f6368; font-size: 13px; }
.lock { width: 10px; height: 12px; margin-right: 13px; }
.navbtns { display: flex; gap: 16px; margin-left: 14px; }
.nav { width: 16px; height: 16px; }
.bookmarks { height: 34px; background: #fff; display: flex; align-items: center; border-bottom: 1px solid #c9c9c9; padding: 0 19px 0 14px; }
.bm-other { color: #202124; font-size: 12px; width: 78px; white-space: nowrap; letter-spacing: .2px; }
.bm-folder { width: 12px; height: 14px; margin-left: 10px; }
.bm-div { width: 1px; height: 18px; background: #c8c8c8; margin-left: 12px; }
.bm-more { margin-left: 10px; font-size: 13px; font-weight: bold; color: #5f6368; }
.bm-fill { flex: 1; }
.bm-weather { color: #202124; font-size: 12px; white-space: nowrap; margin-right: 8px; }
.bm-man { width: 12px; height: 18px; }
.page { flex: 1; display: flex; min-height: 0; }
.gutter { width: 130px; background: #f5f5f5; }
.gutter-r { background: #f5f5f5; width: 130px; }
.pagemain { width: 1092px; background: #fff; display: flex; flex-direction: column; }
.pagetop { height: 58px; width: 55px; text-align: right; padding: 4px 2px 0 0; color: #222; font-size: 11px; }
.cutoff { display: inline-block; }
.box { flex: 1; margin-left: 14px; border: 1px solid #e2e2e2; border-bottom: 0; background: #f5f5f5; padding: 14px 0 0 14px; display: flex; }
.boxinner { flex: 1; background: #fff; padding: 10px 0 0 10px; }
.innercol { width: 16px; border-left: 1px solid #ddd; display: flex; flex-direction: column; height: 534px; }
.searchslot { height: 69px; padding: 4px 0 0 2px; }
.searchcircle { display: block; width: 14px; height: 28px; background: #edf3fa; border-radius: 14px 0 0 14px; font-size: 13px; line-height: 28px; color: #111; }
.innerscroll { margin-left: 2px; width: 13px; height: 426px; background: #f1f1f1; display: flex; flex-direction: column; align-items: center; }
.sb-up { margin-top: 7px; border: 5px solid transparent; border-top: 0; border-bottom: 5px solid #505050; }
.sb-track { height: 133px; }
.sb-thumb { width: 13px; height: 257px; background: #c1c1c1; }
.sb-down { margin-top: 12px; border: 5px solid transparent; border-bottom: 0; border-top: 5px solid #505050; }
.greybar { margin: 7px 0 0 -1px; height: 32px; width: 16px; background: #a9a9a9; color: #fff; font-size: 11px; line-height: 30px; text-align: right; white-space: nowrap; overflow: hidden; }
.pagescroll { width: 14px; background: #f1f1f1; display: flex; flex-direction: column; align-items: center; }
.ps-up { margin-top: 6px; border: 5px solid transparent; border-top: 0; border-bottom: 5px solid #505050; }
.ps-thumb { margin-top: 384px; width: 14px; height: 115px; background: #c1c1c1; }
.ps-down { margin-top: 102px; border: 5px solid transparent; border-bottom: 0; border-top: 5px solid #505050; }

/* Taskbar */
.taskbar { height: 40px; display: flex; align-items: center; background: linear-gradient(90deg, #20383e 0, #203a44 50%, #1e3344 100%); color: #fff; position: relative; }
.tb-line { width: 1px; height: 40px; background: #4a5f66; margin-left: 4px; }
.notif { position: relative; width: 30px; height: 24px; margin-left: 14px; }
.notif-ico { width: 18px; height: 16px; margin: 3px 0 0 6px; }
.notif-badge { position: absolute; left: 0; top: 7px; width: 17px; height: 17px; border: 1px solid #aab; border-radius: 50%; background: #3a4b52; text-align: center; font-size: 11px; line-height: 15px; font-weight: bold; }
.clocktext { width: 70px; margin-left: 5px; display: flex; flex-direction: column; align-items: center; gap: 4px; font-size: 12px; line-height: 14px; color: #e6ebec; }
.tb-lang { margin-left: 6px; width: 22px; font-size: 12px; color: #e6ebec; white-space: nowrap; }
.tb-batt { width: 16px; height: 11px; margin-left: 11px; }
.tb-sound { width: 17px; height: 14px; margin-left: 7px; }
.tb-caret { width: 13px; height: 8px; margin-left: 9px; }
.tb-fill { flex: 1; }
.tb-apps { display: flex; height: 40px; margin-right: 2px; }
.tb-app { width: 49px; height: 40px; display: flex; align-items: center; justify-content: center; padding-bottom: 2px; }
.tb-active { background: #3e5660; border-bottom: 2px solid #75b6ea; padding-bottom: 0; }
.tb-run { background: linear-gradient(#75b6ea, #75b6ea) no-repeat center bottom / 40px 2px; }
.tb-appico { width: 24px; height: 24px; }
.tb-view { width: 18px; height: 18px; margin-left: 5px; }
.wordW { font-family: "Liberation Sans", sans-serif; font-weight: bold; font-size: 10px; fill: #fff; }
.searchbox { width: 343px; height: 40px; background: #f0f0f0; border: 1px solid #b5b5b5; border-width: 1px 0 1px 1px; display: flex; align-items: center; justify-content: flex-end; color: #333; padding-right: 11px; }
.searchtext { font-size: 15px; white-space: nowrap; margin-right: 12px; }
.searchico { width: 18px; height: 18px; }
.winbtn { width: 48px; height: 40px; background: #1a2a4a; display: flex; align-items: center; justify-content: center; }
.winlogo { width: 16px; height: 16px; }

/* Format Factory main window */
.ffwin { position: absolute; left: 185px; top: 0; width: 1024px; height: 720px; background: #b9d7fe; border: 1px solid #8b8b8b; border-width: 1px 1px 0 1px; display: flex; flex-direction: column; }
.ff-title { height: 26px; display: flex; align-items: center; padding: 0 12px 0 4px; flex: none; }
.ff-titleicon { width: 16px; height: 16px; }
.ff-titletext { margin-left: 8px; color: #a8b6c8; font-size: 11px; white-space: nowrap; }
.ff-controls { margin-left: auto; display: flex; gap: 16px; }
.ctl { width: 10px; height: 10px; }
.ff-menu { height: 21px; display: flex; gap: 14px; padding-left: 18px; align-items: center; font-size: 11.5px; flex: none; color: #22304c; }
.ff-tools { height: 43px; display: flex; align-items: center; padding-left: 16px; flex: none; }
.t-folder { width: 30px; height: 25px; }
.t-label { font-size: 12px; white-space: nowrap; color: #1f2a44; }
.t-label.off { color: #aab6c8; }
.t-l1 { margin-left: 2px; width: 52px; }
.t-gear { width: 32px; height: 32px; margin-left: 8px; }
.t-l2 { margin-left: 3px; width: 46px; }
.t-sep { width: 1px; height: 38px; background: #adc7e8; margin-left: 10px; }
.t-doc { width: 24px; height: 32px; margin-left: 10px; }
.dim { opacity: .5; }
.t-l3 { margin-left: 7px; width: 20px; }
.t-i4 { margin-left: 14px; }
.t-l4 { margin-left: 6px; width: 54px; }
.t-s2 { margin-left: 10px; }
.t-reel { position: relative; width: 30px; height: 32px; margin-left: 7px; flex: none; }
.t-reel-i { width: 30px; height: 30px; }
.t-stop { position: absolute; right: 0; bottom: 0; width: 11px; height: 12px; background: #d93b4a; }
.t-play { position: absolute; right: 0; bottom: 0; border: 8px solid transparent; border-left: 12px solid #2f9f3a; border-right: 0; }
.t-l5 { margin-left: 5px; width: 21px; }
.t-i6 { margin-left: 10px; }
.t-l6 { margin-left: 3px; width: 29px; }
.t-s3 { margin-left: 10px; }
.t-globe { width: 33px; height: 35px; margin-left: 6px; }
.t-official { margin: 0 0 2px 2px; color: #f0591a; font-size: 10.300px; font-family: "DejaVu Sans", sans-serif; white-space: nowrap; }
.ff-body { flex: 1; display: flex; min-height: 0; }
.ff-left { width: 385px; display: flex; flex-direction: column; background: #c0dcfe; border-right: 2px solid #aecbf7; flex: none; }
.cat-strip { height: 72px; padding: 3px 0 0 9px; display: flex; flex-direction: column; gap: 11px; flex: none; }
.cat-ico { width: 22px; height: 22px; }
.tiles { flex: 1; display: grid; grid-template-columns: 99px 99px; grid-auto-rows: 89px; gap: 11px; padding-left: 23px; overflow: hidden; background: linear-gradient(90deg, #c0dcfe 0, #cfe3fe 4%, #d3e5ff 100%); border-bottom: 1px solid #8ab4f2; min-height: 0; }
.tile { border: 2px solid #82b1f4; display: flex; flex-direction: column; align-items: center; position: relative; background: radial-gradient(ellipse 120% 100% at 50% -43%, #c8dffd 43%, #a9caf5 99.500%, transparent 100%), linear-gradient(#98bdf2 45%, #d3e5fe 100%); }
.tile-icon { width: 46px; height: 46px; margin-top: 13px; flex: none; }
.tile-custom { width: 66px; height: 54px; margin: 8px 0 0; flex: none; }
.tile-gap { height: 59px; flex: none; }
.tile-label { align-self: flex-start; margin-left: 13px; margin-top: 10px; font-size: 11px; line-height: 14px; color: #10182e; white-space: nowrap; }
.tile-he { margin: 3px 0 0 14px; font-size: 12px; }
.tile-badge { position: absolute; left: 74px; top: 62px; font-size: 14px; color: #0c1020; }
.fileTag { font-family: "Liberation Sans", sans-serif; font-weight: bold; font-size: 10px; }
.tagCyan { fill: #45d4df; font-size: 11px; }
.tagCream { fill: #efe6b8; }
.tagPink { fill: #f48fc0; }
.tagGrey { fill: #d8d8d8; }
.tagMp3 { fill: #fff; font-size: 6.500px; }
.cats-bottom { height: 93px; display: flex; flex-direction: column; flex: none; }
.cat-row { height: 31px; display: flex; align-items: center; padding-left: 7px; color: #2d3650; font-size: 11.5px; }
.cat-row span { flex: 1; text-align: center; margin-right: 6px; white-space: nowrap; }
.cat-big { width: 24px; height: 26px; }
.ff-right { flex: 1; padding: 0 0 0 1px; background: #b9d7fe; min-width: 0; }
.listhead { display: flex; height: 24px; border: 1px solid #8cb6f5; border-width: 1px 0 2px 0; margin-top: -1px; background: #bad8ff; width: 634px; font-size: 12px; line-height: 20px; }
.listhead > span { border-left: 1px solid #8cb6f5; padding-left: 4px; white-space: nowrap; overflow: hidden; color: #2b3347; flex: none; }
.lh-a { width: 140px; }
.lh-b { width: 75px; }
.lh-c { width: 141px; }
.lh-d { width: 140px; }
.lh-e { width: 120px; }
.lh-inner { display: inline-block; }
.lh-f { width: 18px; }
.ff-status { height: 24px; background: #2a5599; display: flex; align-items: center; padding: 0 3px 0 11px; flex: none; }
.st-folder { width: 17px; height: 14px; }
.st-path { margin-left: 3px; color: #dfe9f7; font-size: 11px; width: 65px; white-space: nowrap; letter-spacing: .2px; }
.st-check { margin-left: 12px; width: 13px; height: 13px; background: #fff; border: 1px solid #b5b5b5; display: block; flex: none; }
.st-mt { margin-left: 5px; color: #0a1630; font-size: 11px; white-space: nowrap; letter-spacing: .3px; }
.st-fill { flex: 1; }
.st-time { color: #0a1630; font-size: 11px; white-space: nowrap; }
.st-empty { margin-left: 6px; width: 12px; height: 13px; }
.st-end { margin-left: 5px; color: #0a1630; font-size: 11px; width: 118px; white-space: nowrap; }
.st-grip { width: 12px; height: 12px; margin-left: 9px; }

/* Dialog */
.dialog { position: absolute; left: 339px; top: 102px; width: 716px; height: 517px; background: #c0dcfe; border: 1px solid #1c3e78; box-shadow: 0 2px 8px rgba(40, 70, 120, .45); display: flex; flex-direction: column; }
.dlg-title { height: 25px; background: #b9d8ff; display: flex; align-items: center; padding: 0 12px 0 5px; flex: none; }
.dlg-appicon { width: 15px; height: 15px; }
.dlg-name { margin-left: 8px; font-size: 11px; color: #2c3448; white-space: nowrap; }
.dlg-close { width: 10px; height: 10px; margin-left: auto; }
.dlg-body { padding: 13px 0 0 14px; display: grid; grid-template-columns: 282px 206px 40px 158px; grid-template-rows: 50px 49px 281px 49px 33px; align-items: start; flex: 1; min-height: 0; }
.dlg-quality { display: flex; align-items: flex-start; padding-left: 3px; }
.dlg-mp3 { width: 28px; height: 32px; margin-top: 3px; }
.dlg-qtext { margin-left: 90px; margin-top: 12px; font-size: 12px; white-space: nowrap; color: #2c3448; letter-spacing: .3px; }
.btn { height: 33px; width: 100%; background: #fff; border: 1px solid #b9bec4; display: flex; align-items: center; padding: 0 0 0 7px; font: inherit; font-size: 12px; color: #2c3448; margin: 0; }
.btn-ico { width: 24px; height: 24px; }
.btn-text { flex: 1; text-align: center; padding-right: 3px; }
.btn-off .btn-text { color: #b5b8c0; }
.btn-focus { border-color: #1c3e78; }
.btn-focus .btn-text { color: #1f2a44; }
.dlg-small { display: flex; padding-top: 4px; gap: 3px; }
.sbtn { width: 27px; height: 26px; background: #fff; border: 1px solid #b9bec4; display: flex; align-items: center; justify-content: center; flex: none; }
.sbtn svg { width: 20px; height: 20px; }
.sbtn:nth-child(3) { margin-left: 2px; }
.sbtn:nth-child(4) { margin-left: 1px; }
.dlg-table { grid-column: 1 / -1; height: 266px; width: 686px; background: #fff; border: 1px solid #e7effb; }
.dt-head { display: flex; height: 24px; background: #bbd8ff; border-bottom: 2px solid #94bdf8; font-size: 12px; line-height: 22px; color: #2c3448; }
.dt-head span { border-left: 2px solid #94bdf8; padding-left: 5px; white-space: nowrap; flex: none; }
.c1 { width: 211px; }
.c2 { width: 160px; }
.c3 { width: 70px; }
.c4 { width: 80px; }
.c5 { width: 105px; }
.c6 { width: 57px; }
.dlg-addname { display: flex; align-items: center; padding: 12px 0 0 3px; gap: 3px; grid-column: 1 / 3; font-size: 12px; color: #2c3448; white-space: nowrap; }
.dlg-cb { width: 12px; height: 12px; background: #fff; border: 1px solid #a9b3c0; flex: none; }
.dlg-dest { display: flex; align-items: center; padding-top: 7px; grid-column: 1 / 3; }
.dlg-destlabel { margin-left: 12px; width: 137px; flex: none; font-size: 12px; text-align: left; white-space: nowrap; color: #2c3448; }
.dlg-select { width: 348px; height: 21px; flex: none; background: #e1e1e1; border: 1px solid #adadad; display: flex; align-items: center; padding: 0 5px 0 4px; font-size: 12px; color: #1f2a44; }
.sel-text { white-space: nowrap; }
.sel-caret { width: 10px; height: 6px; margin-left: auto; }
```
